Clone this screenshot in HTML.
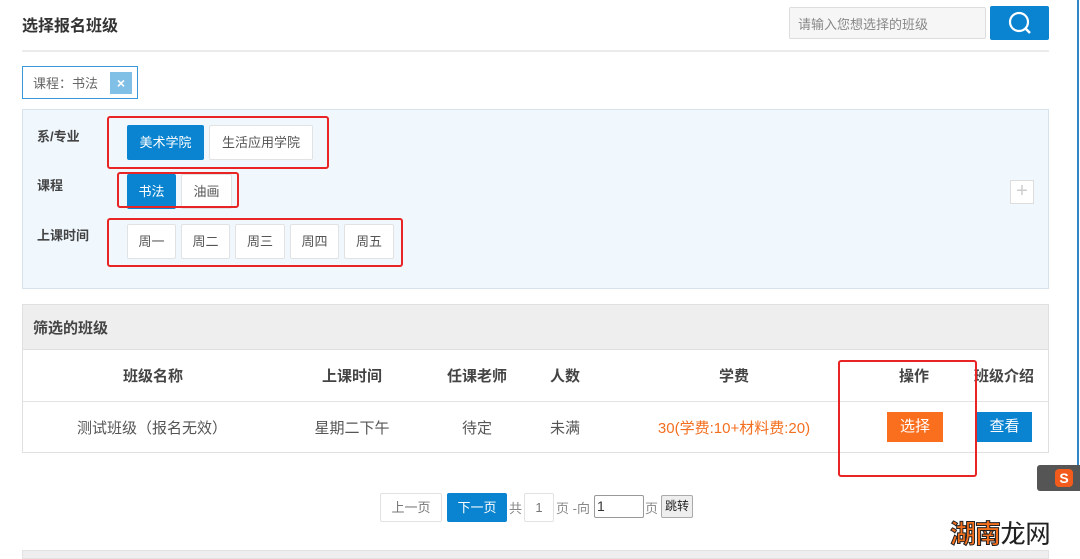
<!DOCTYPE html>
<html><head><meta charset="utf-8"><style>
*{margin:0;padding:0;box-sizing:border-box}
body{width:1080px;height:559px;background:#fff;position:relative;overflow:hidden;font-family:"Liberation Sans","Noto Sans CJK SC",sans-serif;color:#555;font-size:13px}
.a{position:absolute}
.btn{position:absolute;background:#fff;border:1px solid #e2e2e2;text-align:center;font-size:13px;color:#555;border-radius:2px}
.blue{background:#0a84d0;color:#fff;border-color:#0a84d0}
.red{position:absolute;border:2px solid #e82424;border-radius:3px}
.lbl{position:absolute;left:37px;font-weight:bold;font-size:13px;color:#444}
.th{position:absolute;top:365px;font-weight:bold;font-size:15px;color:#444;transform:translateX(-50%);white-space:nowrap}
.td{position:absolute;top:417px;font-size:15px;color:#555;transform:translateX(-50%);white-space:nowrap}
</style></head><body>
<div class="a" style="left:22px;top:12px;font-size:16px;font-weight:bold;color:#333">选择报名班级</div>
<div class="a" style="left:22px;top:50px;width:1027px;height:2px;background:#ebebeb"></div>
<div class="a" style="left:789px;top:7px;width:197px;height:32px;background:#f6f6f6;border:1px solid #ddd;border-radius:2px;padding:6px 8px;font-size:13px;color:#888">请输入您想选择的班级</div>
<div class="a" style="left:990px;top:6px;width:59px;height:34px;background:#0a84d0;border-radius:2px">
<svg width="59" height="34" viewBox="0 0 59 34"><circle cx="29" cy="16" r="9" fill="none" stroke="#fff" stroke-width="2.2"/><line x1="35.5" y1="22.5" x2="40" y2="27" stroke="#fff" stroke-width="2.5"/></svg></div>
<div class="a" style="left:22px;top:66px;width:116px;height:33px;border:1px solid #3a9ad9;padding:6px 10px;font-size:13px;color:#666">课程：书法</div>
<div class="a" style="left:110px;top:72px;width:22px;height:22px;background:#80bfe6;color:#fff;text-align:center;line-height:22px;font-weight:bold;font-size:14px">×</div>
<div class="a" style="left:22px;top:109px;width:1027px;height:180px;background:#f0f8fe;border:1px solid #d8e2ea"></div>
<div class="lbl" style="top:126px">系/专业</div>
<div class="lbl" style="top:175px">课程</div>
<div class="lbl" style="top:225px">上课时间</div>
<div class="btn blue" style="left:127px;top:125px;width:77px;height:35px;line-height:33px">美术学院</div>
<div class="btn" style="left:209px;top:125px;width:104px;height:35px;line-height:33px">生活应用学院</div>
<div class="btn blue" style="left:127px;top:174px;width:49px;height:35px;line-height:33px">书法</div>
<div class="btn" style="left:181px;top:174px;width:51px;height:35px;line-height:33px">油画</div>
<div class="btn" style="left:127px;top:224px;width:49px;height:35px;line-height:33px">周一</div>
<div class="btn" style="left:181px;top:224px;width:49px;height:35px;line-height:33px">周二</div>
<div class="btn" style="left:235px;top:224px;width:50px;height:35px;line-height:33px">周三</div>
<div class="btn" style="left:290px;top:224px;width:49px;height:35px;line-height:33px">周四</div>
<div class="btn" style="left:344px;top:224px;width:50px;height:35px;line-height:33px">周五</div>
<div class="red" style="left:107px;top:116px;width:222px;height:53px"></div>
<div class="red" style="left:117px;top:172px;width:122px;height:36px"></div>
<div class="red" style="left:107px;top:218px;width:296px;height:49px"></div>
<div class="a" style="left:1010px;top:180px;width:24px;height:24px;border:1px solid #ddd;background:#fff;color:#ccc;text-align:center;line-height:21px;font-size:20px">+</div>
<div class="a" style="left:22px;top:304px;width:1027px;height:46px;background:#eee;border:1px solid #e0e0e0;padding:12px 10px;font-size:15px;font-weight:bold;color:#444">筛选的班级</div>
<div class="a" style="left:22px;top:349px;width:1027px;height:104px;border:1px solid #e0e0e0;border-top:none"></div>
<div class="a" style="left:23px;top:401px;width:1025px;height:1px;background:#e4e4e4"></div>
<div class="th" style="left:153px">班级名称</div>
<div class="th" style="left:352px">上课时间</div>
<div class="th" style="left:477px">任课老师</div>
<div class="th" style="left:565px">人数</div>
<div class="th" style="left:734px">学费</div>
<div class="th" style="left:914px">操作</div>
<div class="th" style="left:1004px">班级介绍</div>
<div class="td" style="left:152px">测试班级（报名无效）</div>
<div class="td" style="left:352px">星期二下午</div>
<div class="td" style="left:477px">待定</div>
<div class="td" style="left:565px">未满</div>
<div class="td" style="left:734px;color:#f36f20">30(学费:10+材料费:20)</div>
<div class="a" style="left:887px;top:412px;width:56px;height:30px;background:#fa6f1e;color:#fff;text-align:center;line-height:30px;font-size:15px">选择</div>
<div class="a" style="left:977px;top:412px;width:55px;height:30px;background:#0a84d0;color:#fff;text-align:center;line-height:30px;font-size:15px">查看</div>
<div class="red" style="left:838px;top:360px;width:139px;height:117px"></div>
<div class="btn" style="left:380px;top:493px;width:62px;height:29px;line-height:27px;color:#777">上一页</div>
<div class="btn blue" style="left:447px;top:493px;width:60px;height:29px;line-height:27px">下一页</div>
<div class="a" style="left:509px;top:498px;color:#888">共</div>
<div class="btn" style="left:524px;top:493px;width:30px;height:29px;line-height:27px;color:#777">1</div>
<div class="a" style="left:556px;top:498px;color:#888">页 -向</div>
<div class="a" style="left:594px;top:495px;width:50px;height:23px;border:1px solid #999;border-radius:2px;padding:2px 2px;font-size:14px;color:#333">1</div>
<div class="a" style="left:645px;top:498px;color:#888">页</div>
<div class="a" style="left:661px;top:495px;width:32px;height:23px;border:1px solid #aaa;background:#eee;border-radius:2px;font-size:12px;color:#222;text-align:center;line-height:21px">跳转</div>
<div class="a" style="left:22px;top:550px;width:1027px;height:9px;background:#eee;border:1px solid #e2e2e2"></div>
<div class="a" style="left:1077px;top:0;width:2px;height:465px;background:#2f86c8"></div>
<div class="a" style="left:1037px;top:465px;width:43px;height:26px;background:#555;border-radius:3px 0 0 3px"></div>
<div class="a" style="left:1055px;top:469px;width:18px;height:18px;background:#f35b1c;border-radius:4px;color:#fff;font-weight:bold;text-align:center;line-height:18px;font-size:14px">S</div>
<div class="a" style="left:950px;top:514px;font-size:26px;font-weight:bold;color:#f26f1e;-webkit-text-stroke:1px #222;letter-spacing:-1px">湖南<span style="color:#222;-webkit-text-stroke:1px #fff">龙网</span></div>
</body></html>
